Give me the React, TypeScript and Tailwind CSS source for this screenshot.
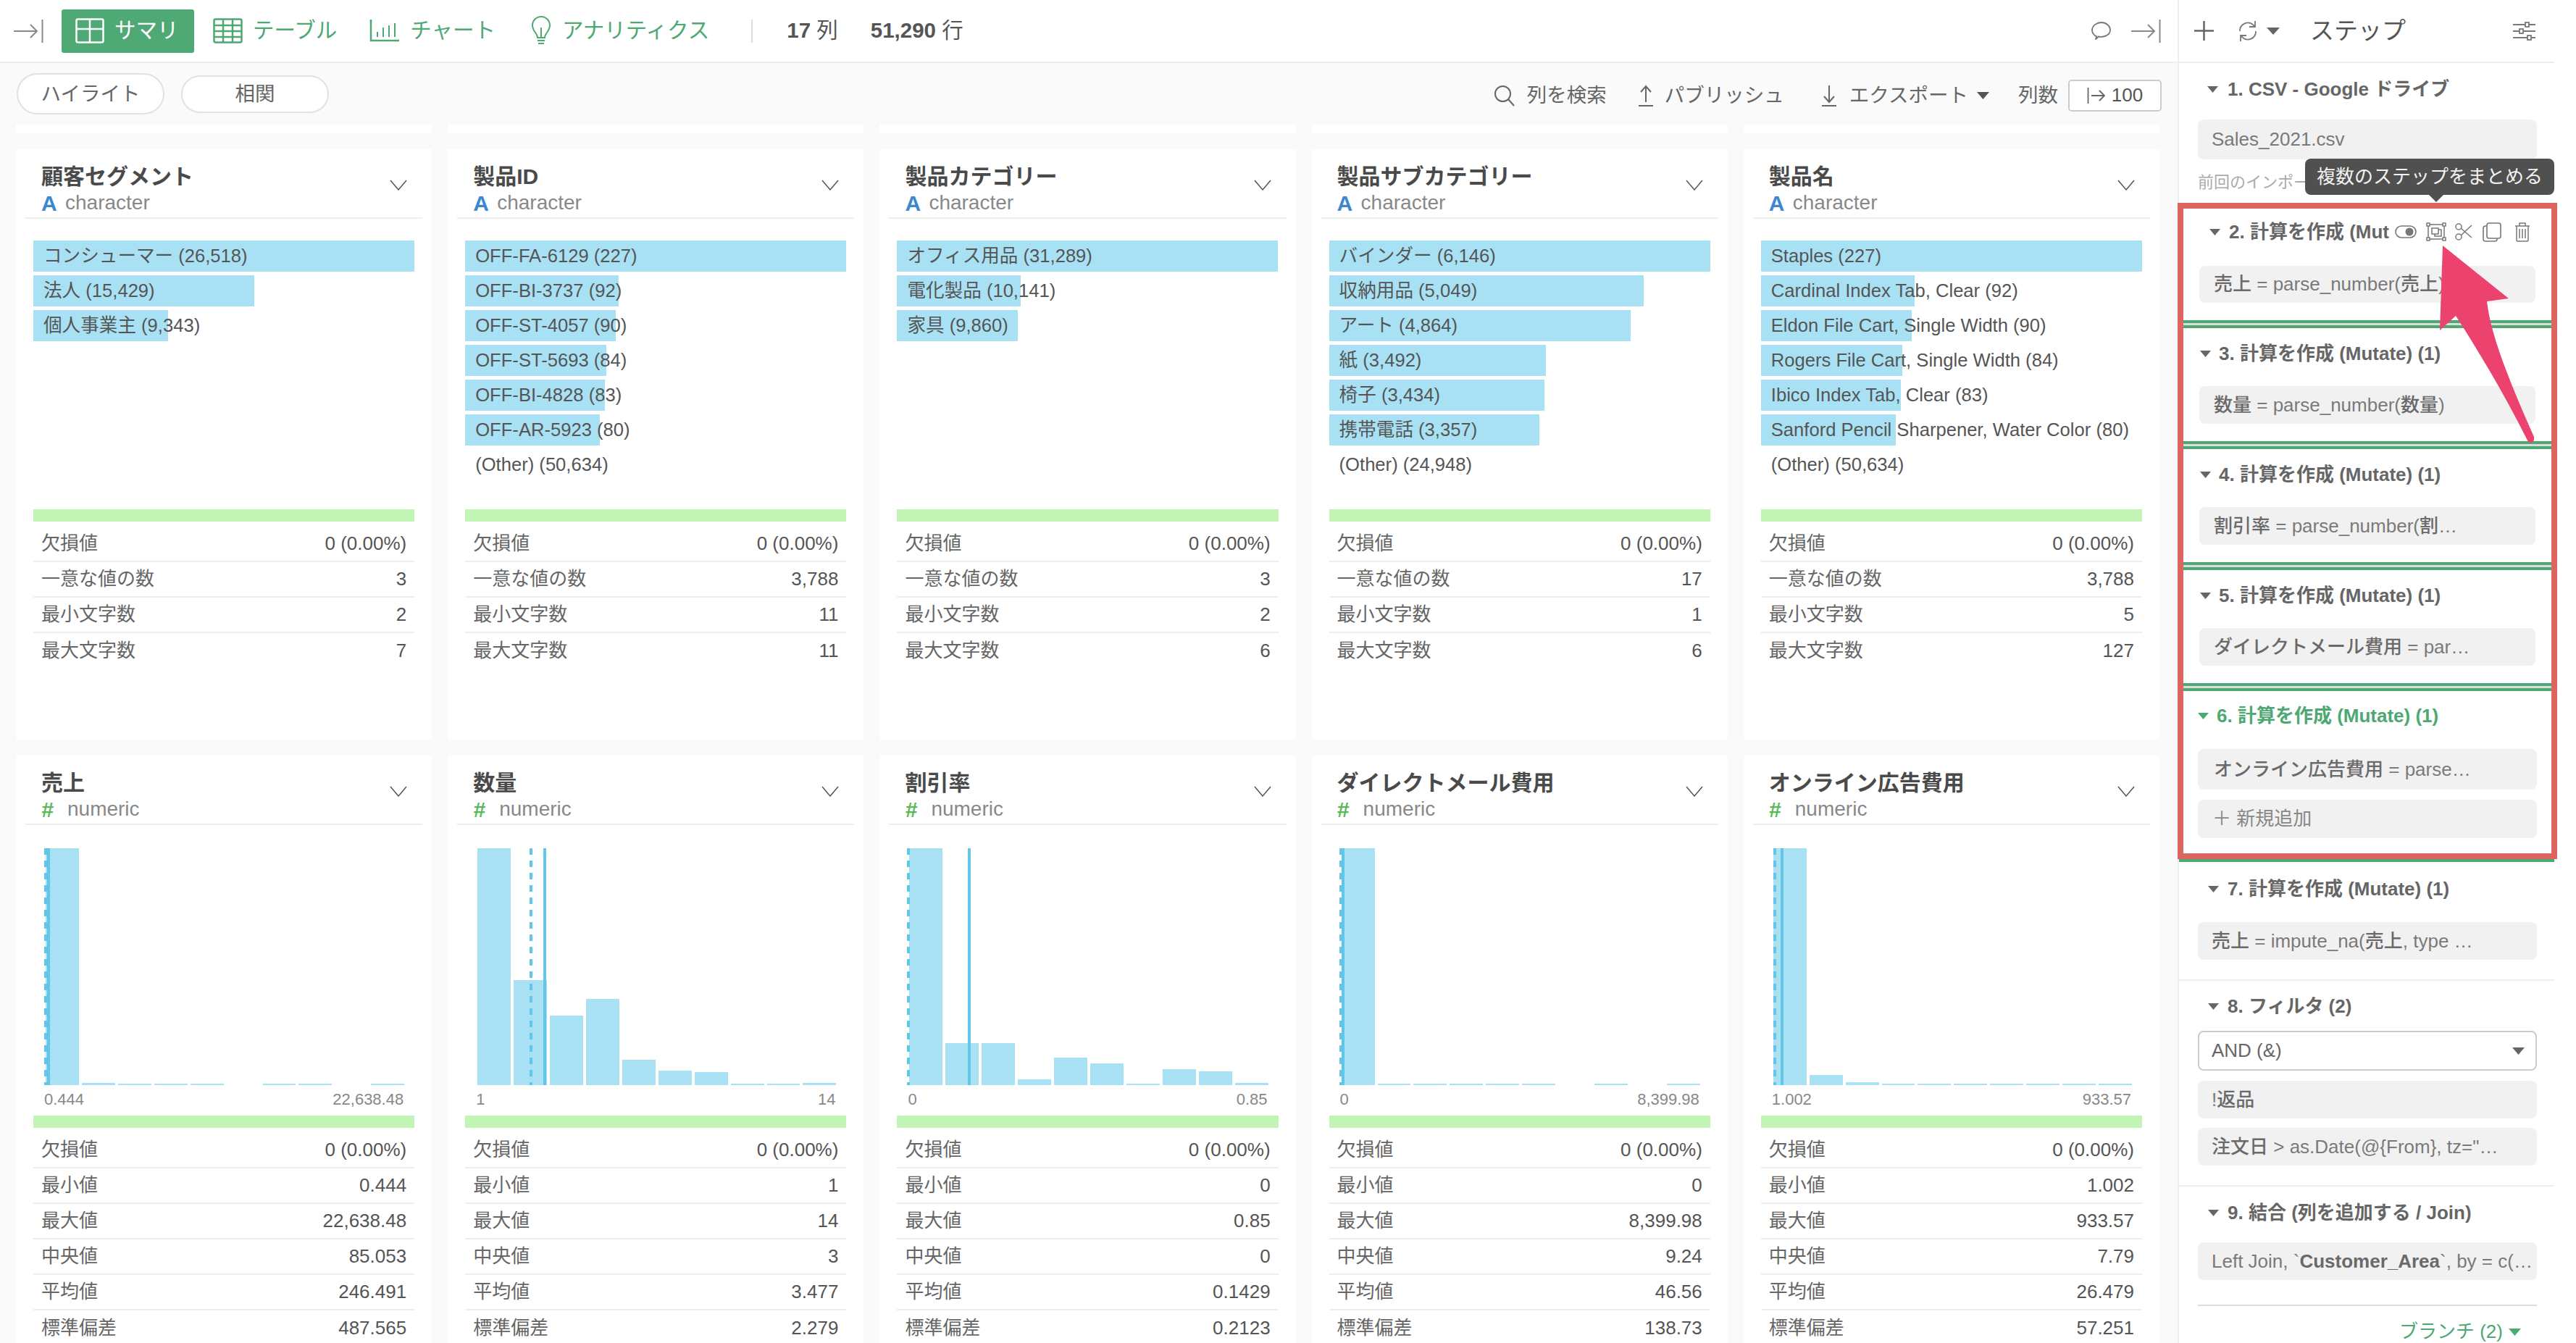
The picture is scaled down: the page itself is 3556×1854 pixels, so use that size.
import React from "react";

type BarRow = { label: string; w: number };
type CharCard = { title: string; bars: BarRow[]; other?: string; stats: string[] };
type NumCard = {
  title: string;
  heights: number[];
  dash: number;
  solid: number;
  min: string;
  max: string;
  stats: string[];
};

const charCards: CharCard[] = [
  {
    title: "顧客セグメント",
    bars: [
      { label: "コンシューマー (26,518)", w: 526 },
      { label: "法人 (15,429)", w: 305 },
      { label: "個人事業主 (9,343)", w: 186 },
    ],
    stats: ["0 (0.00%)", "3", "2", "7"],
  },
  {
    title: "製品ID",
    bars: [
      { label: "OFF-FA-6129 (227)", w: 526 },
      { label: "OFF-BI-3737 (92)", w: 212 },
      { label: "OFF-ST-4057 (90)", w: 208 },
      { label: "OFF-ST-5693 (84)", w: 195 },
      { label: "OFF-BI-4828 (83)", w: 193 },
      { label: "OFF-AR-5923 (80)", w: 186 },
    ],
    other: "(Other) (50,634)",
    stats: ["0 (0.00%)", "3,788", "11", "11"],
  },
  {
    title: "製品カテゴリー",
    bars: [
      { label: "オフィス用品 (31,289)", w: 526 },
      { label: "電化製品 (10,141)", w: 171 },
      { label: "家具 (9,860)", w: 167 },
    ],
    stats: ["0 (0.00%)", "3", "2", "6"],
  },
  {
    title: "製品サブカテゴリー",
    bars: [
      { label: "バインダー (6,146)", w: 526 },
      { label: "収納用品 (5,049)", w: 434 },
      { label: "アート (4,864)", w: 416 },
      { label: "紙 (3,492)", w: 299 },
      { label: "椅子 (3,434)", w: 297 },
      { label: "携帯電話 (3,357)", w: 290 },
    ],
    other: "(Other) (24,948)",
    stats: ["0 (0.00%)", "17", "1", "6"],
  },
  {
    title: "製品名",
    bars: [
      { label: "Staples (227)", w: 526 },
      { label: "Cardinal Index Tab, Clear (92)", w: 212 },
      { label: "Eldon File Cart, Single Width (90)", w: 208 },
      { label: "Rogers File Cart, Single Width (84)", w: 195 },
      { label: "Ibico Index Tab, Clear (83)", w: 193 },
      { label: "Sanford Pencil Sharpener, Water Color (80)", w: 186 },
    ],
    other: "(Other) (50,634)",
    stats: ["0 (0.00%)", "3,788", "5", "127"],
  },
];

const charLabels = ["欠損値", "一意な値の数", "最小文字数", "最大文字数"];
const numLabels = ["欠損値", "最小値", "最大値", "中央値", "平均値", "標準偏差"];

const numCards: NumCard[] = [
  {
    title: "売上",
    heights: [327, 3, 2, 2, 2, 0, 2, 2, 0, 2],
    dash: 39,
    solid: 43,
    min: "0.444",
    max: "22,638.48",
    stats: ["0 (0.00%)", "0.444", "22,638.48", "85.053", "246.491", "487.565"],
  },
  {
    title: "数量",
    heights: [327, 145, 96, 119, 35, 20, 18, 2, 2, 3],
    dash: 113,
    solid: 132,
    min: "1",
    max: "14",
    stats: ["0 (0.00%)", "1", "14", "3", "3.477", "2.279"],
  },
  {
    title: "割引率",
    heights: [327, 58, 58, 8, 38, 30, 2, 22, 19, 3],
    dash: 38,
    solid: 122,
    min: "0",
    max: "0.85",
    stats: ["0 (0.00%)", "0", "0.85", "0", "0.1429", "0.2123"],
  },
  {
    title: "ダイレクトメール費用",
    heights: [327, 2, 2, 2, 2, 2, 0, 2, 0, 2],
    dash: 38,
    solid: 41,
    min: "0",
    max: "8,399.98",
    stats: ["0 (0.00%)", "0", "8,399.98", "9.24", "46.56", "138.73"],
  },
  {
    title: "オンライン広告費用",
    heights: [327, 14, 4, 2, 2, 2, 2, 2, 2, 2],
    dash: 41,
    solid: 51,
    min: "1.002",
    max: "933.57",
    stats: ["0 (0.00%)", "1.002", "933.57", "7.79", "26.479", "57.251"],
  },
];

function Collapse() {
  return (
    <svg width="42" height="34" viewBox="0 0 42 34" fill="none" stroke="#8a8a8a" strokeWidth="2">
      <path d="M0 17H32M23 8l9 9-9 9M39.500 1v32" />
    </svg>
  );
}

function GridIcon() {
  return (
    <svg width="40" height="35" viewBox="0 0 40 35" fill="none" stroke="#fff" strokeWidth="2.500">
      <rect x="1.500" y="1.500" width="37" height="32" rx="2" />
      <path d="M20 1.500v32M1.500 15h37" />
    </svg>
  );
}

function TableIcon() {
  return (
    <svg width="41" height="35" viewBox="0 0 41 35" fill="none" stroke="#4da872" strokeWidth="2.500">
      <rect x="1.500" y="1.500" width="38" height="32" rx="2" />
      <path d="M14 1.500v32M27 1.500v32M1.500 10h38M1.500 18h38M1.500 26h38" />
    </svg>
  );
}

function ChartIcon() {
  return (
    <svg width="41" height="31" viewBox="0 0 41 31" fill="none" stroke="#4da872" strokeWidth="2">
      <path d="M2 0v29h39" strokeWidth="2.500" />
      <path d="M11 24v-7M19 24V11M27 24V8M35 24V5" />
    </svg>
  );
}

function BulbIcon() {
  return (
    <svg width="28" height="41" viewBox="0 0 28 41" fill="none" stroke="#4da872" strokeWidth="2">
      <path d="M9 30c0-6-7-9-7-17a12 12 0 0 1 24 0c0 8-7 11-7 17z" />
      <path d="M9 34h10M10 38h8M14 30V16" />
    </svg>
  );
}

function Search() {
  return (
    <svg width="30" height="30" viewBox="0 0 30 30" fill="none" stroke="#666" strokeWidth="2">
      <circle cx="12.500" cy="12.500" r="10.500" />
      <path d="M20 20l8 9" />
    </svg>
  );
}

function UpDown({ up }: { up: boolean }) {
  return (
    <svg width="24" height="30" viewBox="0 0 24 30" fill="none" stroke="#666" strokeWidth="2">
      {up ? <path d="M12 24V2M5 10l7-8 7 8" /> : <path d="M12 1v23M5 16l7 8 7-8" />}
      <path d="M2 29h20" />
    </svg>
  );
}

function Caret({ color = "#555", w = 18, h = 10 }: { color?: string; w?: number; h?: number }) {
  return (
    <svg width={w} height={h} viewBox="0 0 18 10" className="shrink-0" preserveAspectRatio="none">
      <path d="M0 0h18L9 10z" fill={color} />
    </svg>
  );
}

function Chevron() {
  return (
    <svg width="24" height="15" viewBox="0 0 24 15" fill="none" stroke="#555" strokeWidth="1.500" className="mt-[-12px] shrink-0">
      <path d="M1 1l11 13L23 1" />
    </svg>
  );
}

function TypeLabel({ numeric }: { numeric: boolean }) {
  return (
    <div className="flex h-[36px] items-center text-[28px] text-[#888]">
      {numeric ? (
        <span className="w-[36px] text-[30px] font-bold italic text-[#5cb85c]">#</span>
      ) : (
        <span className="w-[33px] text-[30px] font-bold text-[#3b87d0]">A</span>
      )}
      <span>{numeric ? "numeric" : "character"}</span>
    </div>
  );
}

function CardHeader({ title, numeric }: { title: string; numeric: boolean }) {
  return (
    <div>
      <div className="flex items-center justify-between pb-[2px] pl-[35px] pr-[34px] pt-[18px]">
        <div>
          <div className="flex h-[38px] items-center whitespace-nowrap text-[30px] font-bold text-[#4a4a4a]">{title}</div>
          <TypeLabel numeric={numeric} />
        </div>
        <Chevron />
      </div>
      <div className="mx-[13px] h-[2px] bg-[#eeeeee]" />
    </div>
  );
}

function Stats({ labels, values }: { labels: string[]; values: string[] }) {
  return (
    <div className="mx-[24px] mt-[7px]">
      {labels.map((l, i) => (
        <div
          key={l}
          className={
            i === labels.length - 1
              ? "flex h-[49px] items-center justify-between px-[11px] text-[26px] text-[#555]"
              : "flex h-[49px] items-center justify-between border-b-2 border-[#eeeeee] px-[11px] text-[26px] text-[#555]"
          }
        >
          <span className="text-[#666]">{l}</span>
          <span>{values[i]}</span>
        </div>
      ))}
    </div>
  );
}

function CharacterCard({ c }: { c: CharCard }) {
  return (
    <div className="h-[815px] bg-white">
      <CardHeader title={c.title} numeric={false} />
      <div className="mx-[24px] mt-[30px] flex h-[371px] flex-col gap-[5px]">
        {c.bars.map((b) => (
          <div key={b.label} className="relative flex h-[43px] items-center whitespace-nowrap pl-[14px] text-[25.600px] text-[#555]">
            <div className="absolute inset-y-0 left-0 bg-[#a9e1f4]" style={{ width: b.w }} />
            <span className="relative">{b.label}</span>
          </div>
        ))}
        {c.other && (
          <div className="flex h-[43px] items-center whitespace-nowrap pl-[14px] text-[25.600px] text-[#555]">{c.other}</div>
        )}
      </div>
      <div className="mx-[24px] h-[17px] bg-[#c1f4b5]" />
      <Stats labels={charLabels} values={c.stats} />
    </div>
  );
}

function NumericCard({ c }: { c: NumCard }) {
  return (
    <div className="bg-white pb-[30px]">
      <CardHeader title={c.title} numeric />
      <div className="relative ml-[41px] mr-[38px] mt-[32px] flex h-[327px] items-end gap-[4px]">
        {c.heights.map((h, i) => (
          <div key={i} className="flex-1 bg-[#a9e1f4]" style={{ height: h }} />
        ))}
        <div
          className="absolute inset-y-0 w-[4px] bg-[repeating-linear-gradient(to_bottom,#62c6e9_0,#62c6e9_9px,transparent_9px,transparent_17px)]"
          style={{ left: c.dash - 41 }}
        />
        <div className="absolute inset-y-0 w-[4px] bg-[#62c6e9]" style={{ left: c.solid - 41 }} />
      </div>
      <div className="mx-[39px] mb-[4px] flex h-[38px] items-center justify-between text-[22px] text-[#888]">
        <span>{c.min}</span>
        <span>{c.max}</span>
      </div>
      <div className="mx-[24px] h-[17px] bg-[#c1f4b5]" />
      <Stats labels={numLabels} values={c.stats} />
    </div>
  );
}

function StepHead({
  title,
  green,
  gap,
  marginLeft,
  children,
}: {
  title: string;
  green?: boolean;
  gap: string;
  marginLeft: string;
  children?: React.ReactNode;
}) {
  return (
    <div className={`flex h-[40px] items-center whitespace-nowrap text-[26px] font-bold ${marginLeft} ${green ? "text-[#4da872]" : "text-[#666]"}`}>
      <Caret color={green ? "#4da872" : "#666"} w={15} h={9} />
      <span className={`${gap} min-w-0`}>{title}</span>
      {children}
    </div>
  );
}

function Box({ children, className }: { children: React.ReactNode; className: string }) {
  return (
    <div className={`flex items-center overflow-hidden whitespace-nowrap rounded-[8px] bg-[#f1f1f1] text-[26px] text-[#7a7a7a] ${className}`}>
      <span>{children}</span>
    </div>
  );
}

function Col({ children }: { children: React.ReactNode }) {
  return <b className="font-medium text-[#6a6a6a]">{children}</b>;
}

function GreenLine() {
  return <div className="h-[11px] border-y-[4px] border-[#4da872] bg-[#dddddd]" />;
}

function StepIcons() {
  return (
    <div className="flex items-center">
      <svg width="30" height="20" viewBox="0 0 30 20" fill="none" stroke="#777" strokeWidth="1.600" className="shrink-0">
        <rect x="1" y="2" width="28" height="16" rx="8" />
        <circle cx="20" cy="10" r="5.500" fill="#777" stroke="none" />
      </svg>
      <svg width="28" height="26" viewBox="0 0 28 26" fill="none" stroke="#777" strokeWidth="1.500" className="ml-[13px] shrink-0">
        <path d="M3 3h22v20H3z" />
        <rect x="1" y="1" width="4" height="4" fill="#fff" />
        <rect x="23" y="1" width="4" height="4" fill="#fff" />
        <rect x="1" y="21" width="4" height="4" fill="#fff" />
        <rect x="23" y="21" width="4" height="4" fill="#fff" />
        <path d="M8 8h9v8H8zM12 16v3h9v-9h-4" />
      </svg>
      <svg width="24" height="26" viewBox="0 0 24 26" fill="none" stroke="#777" strokeWidth="1.500" className="ml-[12px] shrink-0">
        <circle cx="5" cy="6" r="4" />
        <circle cx="5" cy="20" r="4" />
        <path d="M8 8l15 13M8 18L23 4" />
      </svg>
      <svg width="26" height="27" viewBox="0 0 26 27" fill="none" stroke="#777" strokeWidth="1.600" className="ml-[14px] shrink-0">
        <rect x="6" y="1" width="19" height="21" rx="3" />
        <path d="M6 5H4a3 3 0 0 0-3 3v15a3 3 0 0 0 3 3h13a3 3 0 0 0 3-3v-1" />
      </svg>
      <svg width="22" height="27" viewBox="0 0 22 27" fill="none" stroke="#777" strokeWidth="1.500" className="ml-[18px] shrink-0">
        <path d="M1 5h20M7 5V1h8v4M3 5v20a1 1 0 0 0 1 1h14a1 1 0 0 0 1-1V5M7 9v13M11 9v13M15 9v13" />
      </svg>
    </div>
  );
}

export default function App() {
  return (
    <div className="relative flex h-[1854px] w-[3556px] overflow-hidden bg-white font-['Liberation_Sans','Noto_Sans_CJK_JP',sans-serif]">
      <main className="flex w-[3006px] shrink-0 flex-col overflow-hidden bg-[#fafafa]">
        <header className="flex h-[87px] shrink-0 items-center border-b-2 border-[#eeeeee] bg-white text-[29.500px] text-[#4da872]">
          <div className="ml-[19px] flex"><Collapse /></div>
          <div className="ml-[24px] flex h-[60px] w-[183px] items-center rounded-[3px] bg-[#4fa974] pl-[19px] text-white">
            <GridIcon />
            <span className="ml-[14px]">サマリ</span>
          </div>
          <div className="ml-[26px] flex items-center">
            <TableIcon />
            <span className="ml-[14px]">テーブル</span>
          </div>
          <div className="ml-[45px] flex items-center">
            <ChartIcon />
            <span className="ml-[15px]">チャート</span>
          </div>
          <div className="ml-[49px] flex items-center">
            <BulbIcon />
            <span className="ml-[15px]">アナリティクス</span>
          </div>
          <div className="ml-[58px] h-[32px] w-[2px] bg-[#dddddd]" />
          <span className="ml-[47px] text-[#555]"><b>17</b> 列</span>
          <span className="ml-[45px] text-[#555]"><b>51,290</b> 行</span>
          <svg width="28" height="25" viewBox="0 0 28 25" fill="none" stroke="#777" strokeWidth="1.800" className="ml-auto">
            <path d="M7 24c2-1 3-2 3.500-3.500C17 22 27 19 27 11.500 27 5.500 21 1 15 1S2 5 2 12c0 3.500 3 7 6 8 0 2-1 3-1 4z" />
          </svg>
          <div className="ml-[28px] mr-[22px] flex"><Collapse /></div>
        </header>
        <div className="flex h-[85px] shrink-0 items-center text-[27.500px] text-[#666]">
          <div className="ml-[23px] flex h-[57px] w-[204px] items-center justify-center rounded-full border-2 border-[#e2e2e2] bg-white">ハイライト</div>
          <div className="ml-[23px] flex h-[52px] w-[204px] items-center justify-center rounded-full border-2 border-[#e2e2e2] bg-white">相関</div>
          <div className="ml-auto flex items-center pt-[4px]">
            <Search />
            <span className="ml-[16px]">列を検索</span>
            <div className="ml-[42px] flex"><UpDown up /></div>
            <span className="ml-[14px]">パブリッシュ</span>
            <div className="ml-[50px] flex"><UpDown up={false} /></div>
            <span className="ml-[16px]">エクスポート</span>
            <div className="ml-[12px]"><Caret color="#555" w={17} h={10} /></div>
            <span className="ml-[40px]">列数</span>
            <div className="ml-[14px] mr-[22px] flex h-[44px] w-[129px] items-center justify-center rounded-[5px] border-2 border-[#cccccc] bg-white text-[26px] text-[#555]">
              <svg width="26" height="24" viewBox="0 0 26 24" fill="none" stroke="#666" strokeWidth="1.800" className="mr-[8px]">
                <path d="M1.500 1v22M6 12h18M17 5l7 7-7 7" />
              </svg>
              100
            </div>
          </div>
        </div>
        <div className="grid w-[2981px] shrink-0 grid-cols-5 gap-x-[22px] pl-[22px]">
          {charCards.map((c) => (
            <div key={c.title} className="h-[12px] bg-white" />
          ))}
        </div>
        <div className="mt-[22px] grid w-[2981px] grid-cols-5 gap-x-[22px] gap-y-[22px] pl-[22px]">
          {charCards.map((c) => (
            <CharacterCard key={c.title} c={c} />
          ))}
          {numCards.map((c) => (
            <NumericCard key={c.title} c={c} />
          ))}
        </div>
      </main>

      <aside className="w-[520px] shrink-0 border-l-2 border-[#eeeeee] bg-white">
        <div className="flex h-[87px] items-center border-b-2 border-[#eeeeee]">
          <svg width="27" height="27" viewBox="0 0 27 27" stroke="#666" strokeWidth="2.500" className="ml-[21px] shrink-0">
            <path d="M13.500 0v27M0 13.500h27" />
          </svg>
          <svg width="30" height="30" viewBox="0 0 30 30" fill="none" stroke="#777" strokeWidth="1.800" className="ml-[32px] shrink-0">
            <path d="M4 15A11 11 0 0 1 23 7l2 2M26 15A11 11 0 0 1 7 23l-2-2M25 1v8h-8M5 29v-8h8" />
          </svg>
          <div className="ml-[11px]"><Caret color="#666" w={18} h={10} /></div>
          <span className="ml-[42px] text-[33px] text-[#555]">ステップ</span>
          <svg width="31" height="26" viewBox="0 0 31 26" fill="none" stroke="#777" strokeWidth="1.800" className="ml-auto mr-[26px]">
            <path d="M0 4h31M0 13h31M0 22h31" />
            <rect x="17" y="1" width="5" height="6" fill="#fff" />
            <rect x="9" y="10" width="5" height="6" fill="#fff" />
            <rect x="20" y="19" width="5" height="6" fill="#fff" />
          </svg>
        </div>

        <section className="h-[196px] pt-[16px]">
          <StepHead title="1. CSV - Google ドライブ" gap="ml-[13px]" marginLeft="ml-[39px]" />
          <Box className="ml-[26px] mr-[24px] mt-[22px] h-[55px] pl-[19px]">Sales_2021.csv</Box>
          <div className="ml-[26px] mt-[17px] h-[30px] w-[148px] overflow-hidden whitespace-nowrap text-[22px] leading-[30px] text-[#aaaaaa]">前回のインポー</div>
        </section>

        <section className="h-[159px] pt-[17px]">
          <StepHead title="2. 計算を作成 (Mut" gap="ml-[12px] w-[229px]" marginLeft="ml-[42px]">
            <StepIcons />
          </StepHead>
          <Box className="ml-[28px] mr-[26px] mt-[27px] h-[51px] pl-[20px]">
            <Col>売上</Col> = parse_number(<Col>売上</Col>)
          </Box>
        </section>
        <GreenLine />

        <section className="h-[156px] pt-[15px]">
          <StepHead title="3. 計算を作成 (Mutate) (1)" gap="ml-[11px]" marginLeft="ml-[29px]" />
          <Box className="ml-[28px] mr-[26px] mt-[25px] h-[52px] pl-[20px]">
            <Col>数量</Col> = parse_number(<Col>数量</Col>)
          </Box>
        </section>
        <GreenLine />

        <section className="h-[156px] pt-[15px]">
          <StepHead title="4. 計算を作成 (Mutate) (1)" gap="ml-[11px]" marginLeft="ml-[29px]" />
          <Box className="ml-[28px] mr-[26px] mt-[25px] h-[52px] pl-[20px]">
            <Col>割引率</Col> = parse_number(<Col>割</Col>…
          </Box>
        </section>
        <GreenLine />

        <section className="h-[156px] pt-[15px]">
          <StepHead title="5. 計算を作成 (Mutate) (1)" gap="ml-[11px]" marginLeft="ml-[29px]" />
          <Box className="ml-[28px] mr-[26px] mt-[25px] h-[52px] pl-[20px]">
            <Col>ダイレクトメール費用</Col> = par…
          </Box>
        </section>
        <GreenLine />

        <section className="h-[232px] pt-[14px]">
          <StepHead title="6. 計算を作成 (Mutate) (1)" green gap="ml-[11px]" marginLeft="ml-[26px]" />
          <Box className="ml-[26px] mr-[24px] mt-[26px] h-[56px] pl-[22px]">
            <Col>オンライン広告費用</Col> = parse…
          </Box>
          <Box className="ml-[26px] mr-[24px] mt-[14px] h-[53px] pl-[20px] text-[#888]">＋ 新規追加</Box>
        </section>
        <div className="h-[4px] bg-[#4da872]" />

        <section className="h-[164px] border-b-2 border-[#eeeeee] pt-[17px]">
          <StepHead title="7. 計算を作成 (Mutate) (1)" gap="ml-[12px]" marginLeft="ml-[40px]" />
          <Box className="ml-[26px] mr-[24px] mt-[26px] h-[52px] pl-[19px]">
            <Col>売上</Col> = impute_na(<Col>売上</Col>, type …
          </Box>
        </section>

        <section className="h-[284px] border-b-2 border-[#eeeeee] pt-[15px]">
          <StepHead title="8. フィルタ (2)" gap="ml-[12px]" marginLeft="ml-[40px]" />
          <div className="ml-[26px] mr-[24px] mt-[14px] flex h-[55px] items-center justify-between rounded-[8px] border-2 border-[#cccccc] pl-[17px] pr-[15px] text-[26px] text-[#666]">
            AND (&amp;)
            <Caret color="#666" w={17} h={10} />
          </div>
          <Box className="ml-[26px] mr-[24px] mt-[14px] h-[52px] pl-[19px]">
            !<Col>返品</Col>
          </Box>
          <Box className="ml-[26px] mr-[24px] mt-[13px] h-[52px] pl-[19px]">
            <Col>注文日</Col> &gt; as.Date(@{"{"}From{"}"}, tz="…
          </Box>
        </section>

        <section className="h-[163px] pt-[16px]">
          <StepHead title="9. 結合 (列を追加する / Join)" gap="ml-[12px]" marginLeft="ml-[40px]" />
          <Box className="ml-[26px] mr-[24px] mt-[21px] h-[52px] pl-[19px]">
            Left Join, `<b className="text-[#6a6a6a]">Customer_Area</b>`, by = c(…
          </Box>
        </section>
        <div className="ml-[26px] mr-[24px] h-[2px] bg-[#dddddd]" />
        <div className="mr-[46px] mt-[16px] flex items-center justify-end text-[26px] text-[#4da872]">
          ブランチ (2)
          <div className="ml-[8px]"><Caret color="#4da872" w={17} h={10} /></div>
        </div>
      </aside>

      <div className="absolute left-[3006px] top-[280px] h-[906px] w-[524px] border-[8px] border-[#dc6560]" />

      <div className="absolute left-[3182px] top-[219px] flex h-[50px] w-[344px] items-center justify-center rounded-[8px] bg-[#505050] text-[26px] text-[#f2f2f2]">
        複数のステップをまとめる
        <div className="absolute left-[171px] top-[50px] h-0 w-0 border-x-[10px] border-t-[10px] border-x-transparent border-t-[#505050]" />
      </div>

      <svg width="150" height="290" viewBox="0 0 150 290" className="absolute left-[3360px] top-[330px]">
        <path d="M12 9L103 82L73 86C78 130 101 190 138 273Q139 281 133 281Q130 281 128 276C100 220 65 160 30 106L8 126Z" fill="#ec436e" />
      </svg>
    </div>
  );
}
